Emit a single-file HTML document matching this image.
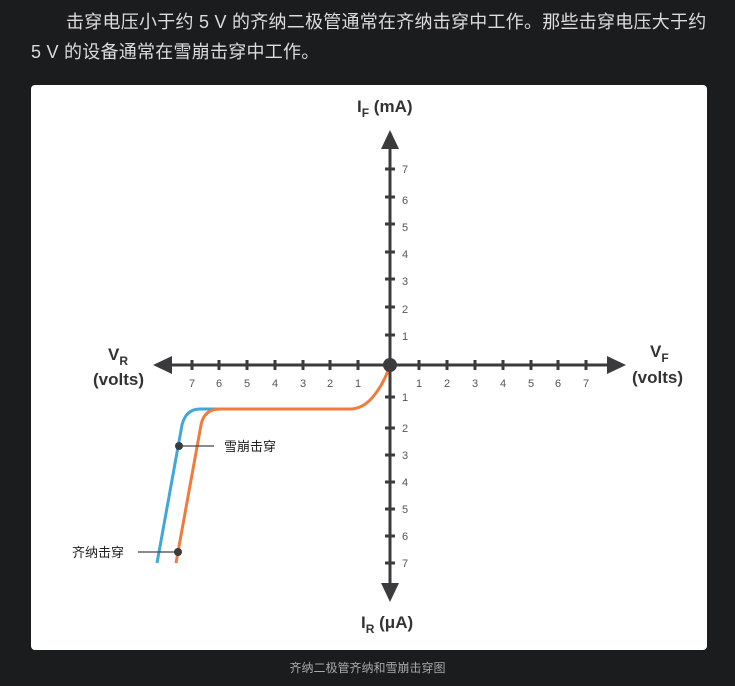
<!DOCTYPE html>
<html><head><meta charset="utf-8"><style>
html,body{margin:0;padding:0;background:#1b1c1e;width:735px;height:686px;overflow:hidden}
p{position:absolute;left:31px;top:7px;width:700px;margin:0;color:#dcdcdc;font:18px/30px "Liberation Sans","Noto Sans CJK SC",sans-serif;letter-spacing:0.25px;text-indent:35px;white-space:nowrap}
.cap{position:absolute;left:0;width:735px;top:659px;text-align:center;color:#a8a8a8;font:12px "Liberation Sans","Noto Sans CJK SC",sans-serif}
svg{position:absolute;left:0;top:0}
</style></head><body>
<p>击穿电压小于约 5 V 的齐纳二极管通常在齐纳击穿中工作。那些击穿电压大于约<br>5 V 的设备通常在雪崩击穿中工作。</p>
<svg width="735" height="686" font-family="Liberation Sans, Noto Sans CJK SC, sans-serif">
<rect x="31" y="85" width="676" height="565" rx="4" fill="#fff"/>
<g stroke="#3b3b3e" stroke-width="3" fill="none">
<line x1="390" y1="145" x2="390" y2="585"/>
<line x1="170" y1="365" x2="610" y2="365"/>
<path d="M192 360v10M219 360v10M247 360v10M275 360v10M303 360v10M330 360v10M358 360v10M419 360v10M447 360v10M475 360v10M503 360v10M531 360v10M558 360v10M586 360v10"/>
<path d="M385 169h10M385 197h10M385 224h10M385 252h10M385 279h10M385 307h10M385 335h10M385 397h10M385 428h10M385 455h10M385 482h10M385 509h10M385 536h10M385 563h10"/>
</g>
<g fill="#3b3b3e">
<path d="M390 130l-9 19h18z"/><path d="M390 602l-9-19h18z"/>
<path d="M626 365l-19-9v18z"/><path d="M153 365l19-9v18z"/>
</g>
<g font-size="11" fill="#555" text-anchor="middle">
<text x="192" y="387">7</text><text x="219" y="387">6</text><text x="247" y="387">5</text><text x="275" y="387">4</text><text x="303" y="387">3</text><text x="330" y="387">2</text><text x="358" y="387">1</text>
<text x="419" y="387">1</text><text x="447" y="387">2</text><text x="475" y="387">3</text><text x="503" y="387">4</text><text x="531" y="387">5</text><text x="558" y="387">6</text><text x="586" y="387">7</text>
<g text-anchor="start">
<text x="402" y="173">7</text><text x="402" y="204">6</text><text x="402" y="231">5</text><text x="402" y="258">4</text><text x="402" y="285">3</text><text x="402" y="313">2</text><text x="402" y="340">1</text>
<text x="402" y="401">1</text><text x="402" y="432">2</text><text x="402" y="459">3</text><text x="402" y="486">4</text><text x="402" y="513">5</text><text x="402" y="540">6</text><text x="402" y="567">7</text>
</g></g>
<g font-size="17" fill="#333" font-weight="bold">
<text x="357" y="112">I<tspan font-size="12" dy="5">F</tspan><tspan dy="-5"> (mA)</tspan></text>
<text x="361" y="628">I<tspan font-size="12" dy="5">R</tspan><tspan dy="-5"> (μA)</tspan></text>
<text x="108" y="360">V<tspan font-size="12" dy="5">R</tspan></text>
<text x="93" y="385">(volts)</text>
<text x="650" y="357">V<tspan font-size="12" dy="5">F</tspan></text>
<text x="632" y="383">(volts)</text>
</g>
<path d="M157 563L182 425Q186 409 200 409L352 409" stroke="#3fa7d9" stroke-width="3" fill="none"/>
<path d="M176 563L201 425Q204 409 220 409L350 409Q362 409 372 398Q384 384 390 365" stroke="#f07b3c" stroke-width="3" fill="none"/>
<circle cx="390" cy="365" r="7" fill="#3b3b3e"/>
<g stroke="#444" stroke-width="1.3"><line x1="179" y1="446" x2="214" y2="446"/><line x1="138" y1="552" x2="178" y2="552"/></g>
<circle cx="179" cy="446" r="4" fill="#3b3b3e"/><circle cx="178" cy="552" r="4" fill="#3b3b3e"/>
<g font-size="13" fill="#222"><text x="224" y="451">雪崩击穿</text><text x="72" y="557">齐纳击穿</text></g>
</svg>
<div class="cap">齐纳二极管齐纳和雪崩击穿图</div>
</body></html>
